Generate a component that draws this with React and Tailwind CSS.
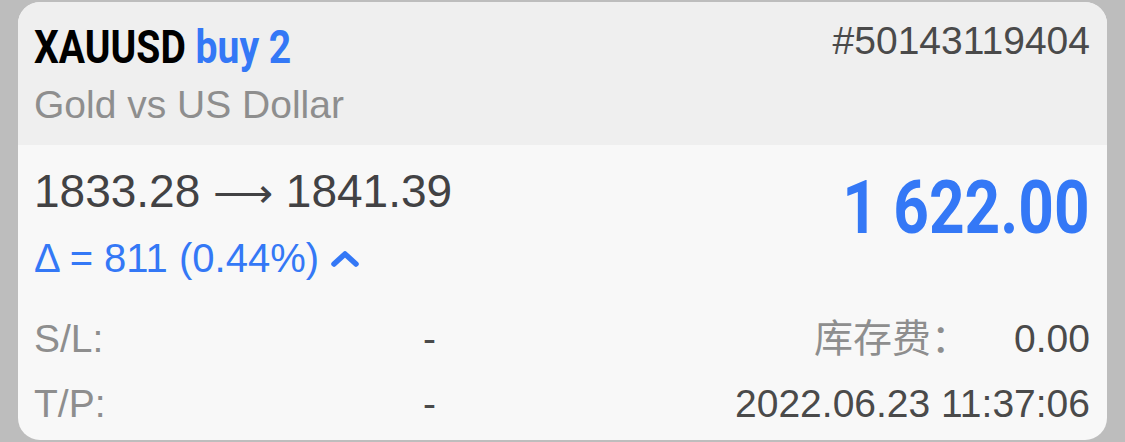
const sans = "font-['Liberation_Sans','Noto_Sans_CJK_SC',sans-serif]";
const tight = "font-['Roboto',sans-serif]";

function ChevronUp() {
  return (
    <svg width="30" height="18" viewBox="0 0 30 18" className="ml-[11px] mt-[2px]">
      <polyline
        points="4,14 15,4 26,14"
        fill="none"
        stroke="#3478f6"
        strokeWidth="5.5"
        strokeLinecap="round"
        strokeLinejoin="round"
      />
    </svg>
  );
}

function InfoRow({ label, value, rightLabel, rightValue }) {
  return (
    <div className="flex items-start leading-[65px] text-[39px]">
      <div className="flex w-[402px] justify-between">
        <span className="text-[#8e8e8e]">{label}</span>
        <span className="text-[#4a4a4a]">{value}</span>
      </div>
      <div className="flex flex-1 justify-end">
        {rightLabel && <span className="text-[#8e8e8e] mr-[44px]">{rightLabel}</span>}
        <span className="text-[#4a4a4a]">{rightValue}</span>
      </div>
    </div>
  );
}

export default function App() {
  return (
    <div className={`w-[1125px] h-[442px] bg-[#bdbdbd] px-[18px] py-[2px] ${sans}`}>
      <div className="h-full rounded-[22px] overflow-hidden bg-[#f8f8f8] flex flex-col">
        {/* header */}
        <div className="bg-[#efefef] flex items-start justify-between pl-[16px] pr-[17px] pt-[15px] pb-[16px]">
          <div className="flex flex-col">
            <div className={`mt-[5px] leading-[50px] text-[46px] font-bold origin-left scale-x-[0.85] whitespace-nowrap ${tight}`}>
              <span className="text-black">XAUUSD</span>{" "}
              <span className="text-[#3478f6]">buy 2</span>
            </div>
            <div className="mt-[9px] leading-[48px] text-[39px] text-[#8e8e8e]">Gold vs US Dollar</div>
          </div>
          <div className="leading-[48px] text-[39px] text-[#4a4a4a]">#50143119404</div>
        </div>

        {/* body */}
        <div className="flex-1 pl-[16px] pr-[17px] pt-[18px]">
          <div className="flex items-start justify-between">
            <div className="flex flex-col">
              <div className="h-[56px] leading-[56px] text-[46px] text-[#424244] whitespace-nowrap">
                1833.28 <span className="text-[42px] leading-none">⟶</span> 1841.39
              </div>
              <div className="mt-[15px] flex items-center leading-[48px] text-[40px] text-[#3478f6]">
                <span>Δ = 811 (0.44%)</span>
                <ChevronUp />
              </div>
            </div>
            <div className={`mt-[5px] leading-[80px] text-[74px] font-bold text-[#3478f6] origin-right scale-x-[0.84] whitespace-nowrap ${tight}`}>
              1 622.00
            </div>
          </div>

          <div className="mt-[24px] flex flex-col">
            <InfoRow label="S/L:" value="-" rightLabel="库存费：" rightValue="0.00" />
            <InfoRow label="T/P:" value="-" rightValue="2022.06.23 11:37:06" />
          </div>
        </div>
      </div>
    </div>
  );
}
